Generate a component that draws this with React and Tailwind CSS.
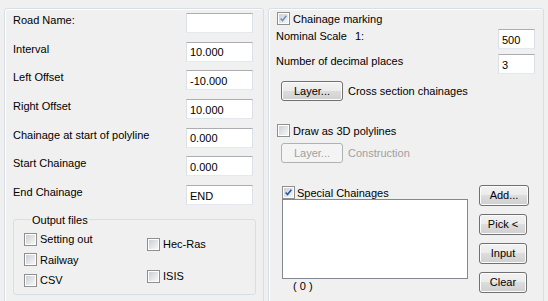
const FONT = "font-['Liberation_Sans',Arial,sans-serif]";

function Field({ value, w = 'w-[67px]' }) {
  return (
    <div
      className={`${w} h-[20px] shrink-0 bg-white border border-[#abadb3] border-l-[#dbdfe6] border-r-[#dbdfe6] border-b-[#e3e9ef] flex items-center pl-[3px] pt-[2px] text-[11px] text-black`}
    >
      {value}
    </div>
  );
}

function Check({ checked, tone = 'strong' }) {
  return (
    <span className="w-[13px] h-[13px] shrink-0 border border-[#8e8f8f] bg-white p-[1px] flex">
      <span className="relative flex-1 bg-linear-to-br from-[#cbcfd5] to-[#f7f7f7]">
        {checked && (
          <svg viewBox="0 0 11 11" className="absolute inset-0 w-full h-full">
            <path
              d="M2 5.5 L4.3 8 L9 2.2"
              fill="none"
              stroke={tone === 'strong' ? '#2456a8' : '#6f8fbf'}
              strokeWidth="1.9"
            />
          </svg>
        )}
      </span>
    </span>
  );
}

function CheckRow({ label, checked, gap = 'gap-[3px]', tone }) {
  return (
    <div className={`flex items-center ${gap} h-[13px]`}>
      <Check checked={checked} tone={tone} />
      <span className="text-[11px] leading-[14px] whitespace-nowrap">{label}</span>
    </div>
  );
}

function Button({ label, w = 'w-[62px]', h = 'h-[20px]', disabled }) {
  return (
    <div
      className={`${w} ${h} shrink-0 rounded-[3px] border flex items-center justify-center text-[11px] ${
        disabled
          ? 'border-[#adb2b5] bg-[#f4f4f4] text-[#a0a0a0]'
          : 'border-[#707070] bg-[linear-gradient(#f2f2f2_0%,#ebebeb_50%,#dddddd_50%,#cfcfcf_100%)] shadow-[inset_0_0_0_1px_#fcfcfc] text-black'
      }`}
    >
      {label}
    </div>
  );
}

function Row({ label, value }) {
  return (
    <div className="flex justify-between items-start h-[20px]">
      <span className="text-[11px] leading-[14px] whitespace-nowrap">{label}</span>
      <Field value={value} />
    </div>
  );
}

const ROWS = [
  ['Road Name:', ''],
  ['Interval', '10.000'],
  ['Left Offset', '-10.000'],
  ['Right Offset', '10.000'],
  ['Chainage at start of polyline', '0.000'],
  ['Start Chainage', '0.000'],
  ['End Chainage', 'END'],
];

export default function App() {
  return (
    <div className={`w-[548px] h-[301px] overflow-hidden bg-[#f0f0f0] text-black ${FONT}`}>
      <div className="flex gap-[4px] pl-[4px] pt-[8px]">
        {/* Left panel */}
        <div className="w-[260px] h-[310px] shrink-0 border border-[#d5dfe5] rounded-[3px] shadow-[inset_1px_1px_0_#ffffff] pt-[4px] pl-[8px] pr-[10px]">
          <div className="flex flex-col gap-[8.67px]">
            {ROWS.map(([l, v]) => (
              <Row key={l} label={l} value={v} />
            ))}
          </div>

          {/* Output files */}
          <fieldset className="mt-[7px] w-[243px] h-[83px] border border-[#d5dfe5] rounded-[3px] pl-[10px]">
            <legend className="ml-[7px] px-[1px] text-[11px] leading-[14px] pt-[1px]">Output files</legend>
            <div className="flex pt-[6px]">
              <div className="w-[123px] flex flex-col gap-[7.5px]">
                <CheckRow label="Setting out" />
                <CheckRow label="Railway" />
                <CheckRow label="CSV" />
              </div>
              <div className="flex flex-col gap-[19px] pt-[5px]">
                <CheckRow label="Hec-Ras" />
                <CheckRow label="ISIS" />
              </div>
            </div>
          </fieldset>
        </div>

        {/* Right panel */}
        <div className="w-[276px] h-[310px] shrink-0 border border-[#d5dfe5] rounded-[3px] shadow-[inset_1px_1px_0_#ffffff] pt-[3px] pl-[8px] pr-[8px] flex flex-col">
          <CheckRow label="Chainage marking" checked tone="soft" />

          <div className="mt-[4px] -ml-[1px] flex justify-between items-start h-[20px]">
            <span className="text-[11px] leading-[14px] whitespace-nowrap">
              Nominal Scale<span className="ml-[8px]">1:</span>
            </span>
            <Field value="500" w="w-[37px]" />
          </div>
          <div className="mt-[5px] -ml-[1px] flex justify-between items-start h-[20px]">
            <span className="text-[11px] leading-[14px]">Number of decimal places</span>
            <Field value="3" w="w-[37px]" />
          </div>

          <div className="mt-[7px] ml-[4px] flex items-center gap-[5px]">
            <Button label="Layer..." />
            <span className="text-[11px]">Cross section chainages</span>
          </div>

          <div className="mt-[23px]">
            <CheckRow label="Draw as 3D polylines" />
          </div>

          <div className="mt-[6px] ml-[4px] flex items-center gap-[5px]">
            <Button label="Layer..." disabled />
            <span className="text-[11px] text-[#a0a0a0]">Construction</span>
          </div>

          <div className="mt-[22px] flex gap-[11px] pl-[5px]">
            <div className="flex flex-col pt-[1px]">
              <CheckRow label="Special Chainages" checked gap="gap-[2px]" />
              <div className="w-[186px] h-[80px] bg-white border border-[#828790]" />
              <span className="ml-[11px] text-[11px] leading-[14px]">( 0 )</span>
            </div>
            <div className="flex flex-col gap-[8px]">
              <Button label="Add..." w="w-[50px]" h="h-[21px]" />
              <Button label="Pick <" w="w-[48px]" h="h-[21px]" />
              <Button label="Input" w="w-[48px]" h="h-[21px]" />
              <Button label="Clear" w="w-[48px]" h="h-[21px]" />
            </div>
          </div>
        </div>
      </div>
    </div>
  );
}
